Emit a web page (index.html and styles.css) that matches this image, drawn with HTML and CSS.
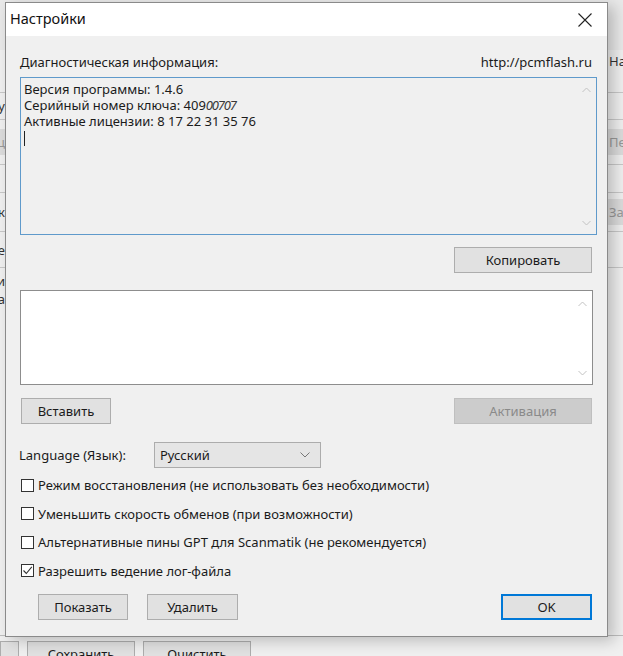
FILE: index.html
```html
<!DOCTYPE html>
<html lang="ru">
<head>
  <meta charset="UTF-8">
  <title>Настройки</title>
  <link rel="stylesheet" href="styles.css">
</head>
<body>
  <!-- окно программы под диалогом -->
  <div class="app">
    <div class="app-row r1"></div>
    <div class="app-row r2"><span class="frag-l"></span><span class="frag-r">Настройки</span></div>
    <div class="app-row r3 line"></div>
    <div class="app-row r4 line"><span class="frag-l">Ключу</span><span class="frag-r"></span></div>
    <div class="app-row r5 line"><span class="frag-l btn-frag">Пуц</span><span class="frag-r btn-frag">Перевод</span></div>
    <div class="app-row r6 line"></div>
    <div class="app-row r7 line"><span class="frag-l">Блок</span><span class="frag-r btn-frag">Запись</span></div>
    <div class="app-row r8 line"><span class="frag-l">Эе</span><span class="frag-r"></span></div>
    <div class="app-row r9"><span class="frag-l">Ли</span><span class="frag-r"></span></div>
    <div class="app-row r10"><span class="frag-l">Ла</span><span class="frag-r"></span></div>
    <div class="app-fill"></div>
    <div class="app-bottom">
      <span class="app-btn first"></span>
      <span class="app-btn">Сохранить</span>
      <span class="app-btn">Очистить</span>
    </div>
  </div>

  <div class="dialog">
    <div class="titlebar">
      <span class="title">Настройки</span>
      <span class="close">
        <svg width="14" height="14" viewBox="0 0 14 14"><path d="M0.5 0.5L13.5 13.5M13.5 0.5L0.5 13.5" stroke="#222" stroke-width="1.1" fill="none"/></svg>
      </span>
    </div>

    <div class="body">
      <div class="head">
        <span>Диагностическая информация:</span>
        <span>http://pcmflash.ru</span>
      </div>

      <div class="memo info">
        <div class="memo-text">
          <div class="line-t">Версия программы: 1.4.6</div>
          <div class="line-t">Серийный номер ключа: 409<span class="scribble">00707</span></div>
          <div class="line-t">Активные лицензии: 8 17 22 31 35 76</div>
          <div class="line-t"><span class="caret"></span></div>
        </div>
        <div class="scroll">
          <svg width="9" height="6" viewBox="0 0 9 6"><path d="M0.5 5L4.5 1L8.5 5" stroke="#c2c2c2" fill="none"/></svg>
          <svg width="9" height="6" viewBox="0 0 9 6"><path d="M0.5 1L4.5 5L8.5 1" stroke="#c2c2c2" fill="none"/></svg>
        </div>
      </div>

      <div class="row end copy-row">
        <button class="btn wide">Копировать</button>
      </div>

      <div class="memo key">
        <div class="memo-text"></div>
        <div class="scroll">
          <svg width="9" height="6" viewBox="0 0 9 6"><path d="M0.5 5L4.5 1L8.5 5" stroke="#c2c2c2" fill="none"/></svg>
          <svg width="9" height="6" viewBox="0 0 9 6"><path d="M0.5 1L4.5 5L8.5 1" stroke="#c2c2c2" fill="none"/></svg>
        </div>
      </div>

      <div class="row between act-row">
        <button class="btn">Вставить</button>
        <button class="btn wide" disabled>Активация</button>
      </div>

      <div class="row lang-row">
        <span class="lang-label">Language (Язык):</span>
        <div class="select">
          <span>Русский</span>
          <svg width="10" height="6" viewBox="0 0 10 6"><path d="M0.5 0.5L5 5L9.5 0.5" stroke="#777" fill="none"/></svg>
        </div>
      </div>

      <div class="checks">
        <label class="check"><span class="box"></span>Режим восстановления (не использовать без необходимости)</label>
        <label class="check"><span class="box"></span>Уменьшить скорость обменов (при возможности)</label>
        <label class="check"><span class="box"></span>Альтернативные пины GPT для Scanmatik (не рекомендуется)</label>
        <label class="check"><span class="box checked"><svg width="11" height="11" viewBox="0 0 11 11"><path d="M1.5 5.5L4.3 8.5L9.8 1.8" stroke="#333" stroke-width="1.1" fill="none"/></svg></span>Разрешить ведение лог-файла</label>
      </div>

      <div class="row bottom-row">
        <button class="btn show">Показать</button>
        <button class="btn del">Удалить</button>
        <button class="btn ok">OK</button>
      </div>
    </div>
  </div>
</body>
</html>
```

FILE: styles.css
```css
body {
  margin: 0;
  width: 623px;
  height: 656px;
  overflow: hidden;
  position: relative;
  font-family: 'Noto Sans', 'Open Sans', sans-serif;
  font-size: 13px;
  color: #1b1b1b;
  background: #f0f0f0;
}

/* окно под диалогом */
.app {
  height: 656px;
  display: flex;
  flex-direction: column;
}
.app-row {
  display: flex;
  justify-content: space-between;
  align-items: center;
}
.app-row.line { border-bottom: 1px solid #c8c8c8; }
.r1 { height: 50px; background: #e9e9e9; }
.r2 { height: 22px; }
.r3 { height: 20px; }
.r4 { height: 26px; }
.r5 { height: 44px; }
.r6 { height: 27px; }
.r7 { height: 38px; }
.r8 { height: 35px; }
.r9 { height: 18px; margin-top: 4px; }
.r10 { height: 18px; }
.frag-l {
  width: 5px;
  overflow: hidden;
  display: flex;
  justify-content: flex-end;
  white-space: nowrap;
  color: #333;
}
.frag-r {
  width: 14px;
  overflow: hidden;
  white-space: nowrap;
  color: #333;
  padding-left: 1px;
}
.btn-frag {
  background: #dcdcdc;
  color: #999;
  height: 26px;
  line-height: 26px;
}
.app-fill { flex: 1; }
.app-bottom {
  height: 20px;
  display: flex;
  align-items: flex-end;
  gap: 8px;
  border-top: 1px solid #bdbdbd;
}
.app-btn {
  width: 106px;
  height: 14px;
  border: 1px solid #adadad;
  border-bottom: none;
  background: #e1e1e1;
  text-align: center;
  line-height: 24px;
  overflow: hidden;
}
.app-btn.first { width: 17px; }

/* диалог */
.dialog {
  position: absolute;
  left: 5px;
  top: 2px;
  width: 603px;
  height: 635px;
  box-sizing: border-box;
  border: 1px solid #8a8a8a;
  background: #f0f0f0;
  box-shadow: 6px 4px 14px rgba(0, 0, 0, 0.22);
  display: flex;
  flex-direction: column;
}
.titlebar {
  height: 33px;
  box-sizing: border-box;
  padding: 0 0 3px 4px;
  background: #fff;
  display: flex;
  align-items: center;
  justify-content: space-between;
  flex-shrink: 0;
}
.title { font-size: 14.5px; color: #111; }
.close {
  width: 44px;
  display: flex;
  justify-content: center;
  padding-top: 3px;
}

.body {
  padding: 17px 9px 0 14px;
  display: flex;
  flex-direction: column;
}
.head {
  width: 572px;
  height: 18px;
  display: flex;
  justify-content: space-between;
  align-items: center;
}

.memo {
  display: flex;
  box-sizing: border-box;
  border: 1px solid #a0a0a0;
}
.memo.info {
  margin-top: 6px;
  height: 158px;
  width: 577px;
  border-color: #5f9acb;
  background: #f0f0f0;
}
.memo.key {
  margin-top: 17px;
  height: 95px;
  width: 573px;
  border-color: #8d8d8d;
  background: #fff;
}
.memo-text {
  flex: 1;
  padding: 3px 3px;
  line-height: 16px;
}
.line-t { height: 16px; }
.scroll {
  width: 20px;
  display: flex;
  flex-direction: column;
  justify-content: space-between;
  align-items: center;
  padding: 9px 0 8px;
}
.memo.key .scroll { padding: 10px 0 8px; }
.scribble {
  font-style: italic;
  letter-spacing: -1.2px;
  color: #3a3a3a;
}
.caret {
  display: inline-block;
  width: 1px;
  height: 15px;
  background: #222;
  vertical-align: middle;
}

.row { display: flex; align-items: center; }
.row.end { justify-content: flex-end; }
.row.between { justify-content: space-between; }
.copy-row { margin-top: 12px; width: 572px; }

.btn {
  font-family: inherit;
  font-size: 13px;
  color: #1b1b1b;
  height: 26px;
  width: 90px;
  border: 1px solid #adadad;
  background: #e1e1e1;
  padding: 0;
}
.btn.wide { width: 138px; }
.btn:disabled {
  background: #cccccc;
  border-color: #bfbfbf;
  color: #8a8a8a;
}

.act-row { margin-top: 13px; width: 571px; margin-left: 1px; }

.lang-row { margin-top: 18px; height: 26px; }
.lang-label { width: 135px; margin-left: -1px; }
.select {
  width: 167px;
  height: 26px;
  box-sizing: border-box;
  border: 1px solid #acacac;
  background: #e5e5e5;
  display: flex;
  align-items: center;
  justify-content: space-between;
  padding: 0 10px 0 5px;
}

.checks {
  margin-top: 3px;
  display: flex;
  flex-direction: column;
}
.check {
  height: 28.5px;
  display: flex;
  align-items: center;
  gap: 4px;
}
.box {
  width: 13px;
  height: 13px;
  box-sizing: border-box;
  border: 1px solid #333;
  background: #fff;
  margin-left: 1px;
  display: flex;
  align-items: center;
  justify-content: center;
}

.bottom-row { margin-top: 9px; width: 572px; }
.btn.show { margin-left: 18px; }
.btn.del { margin-left: 19px; width: 91px; }
.btn.ok {
  margin-left: auto;
  width: 91px;
  border: 2px solid #0078d7;
}
```
